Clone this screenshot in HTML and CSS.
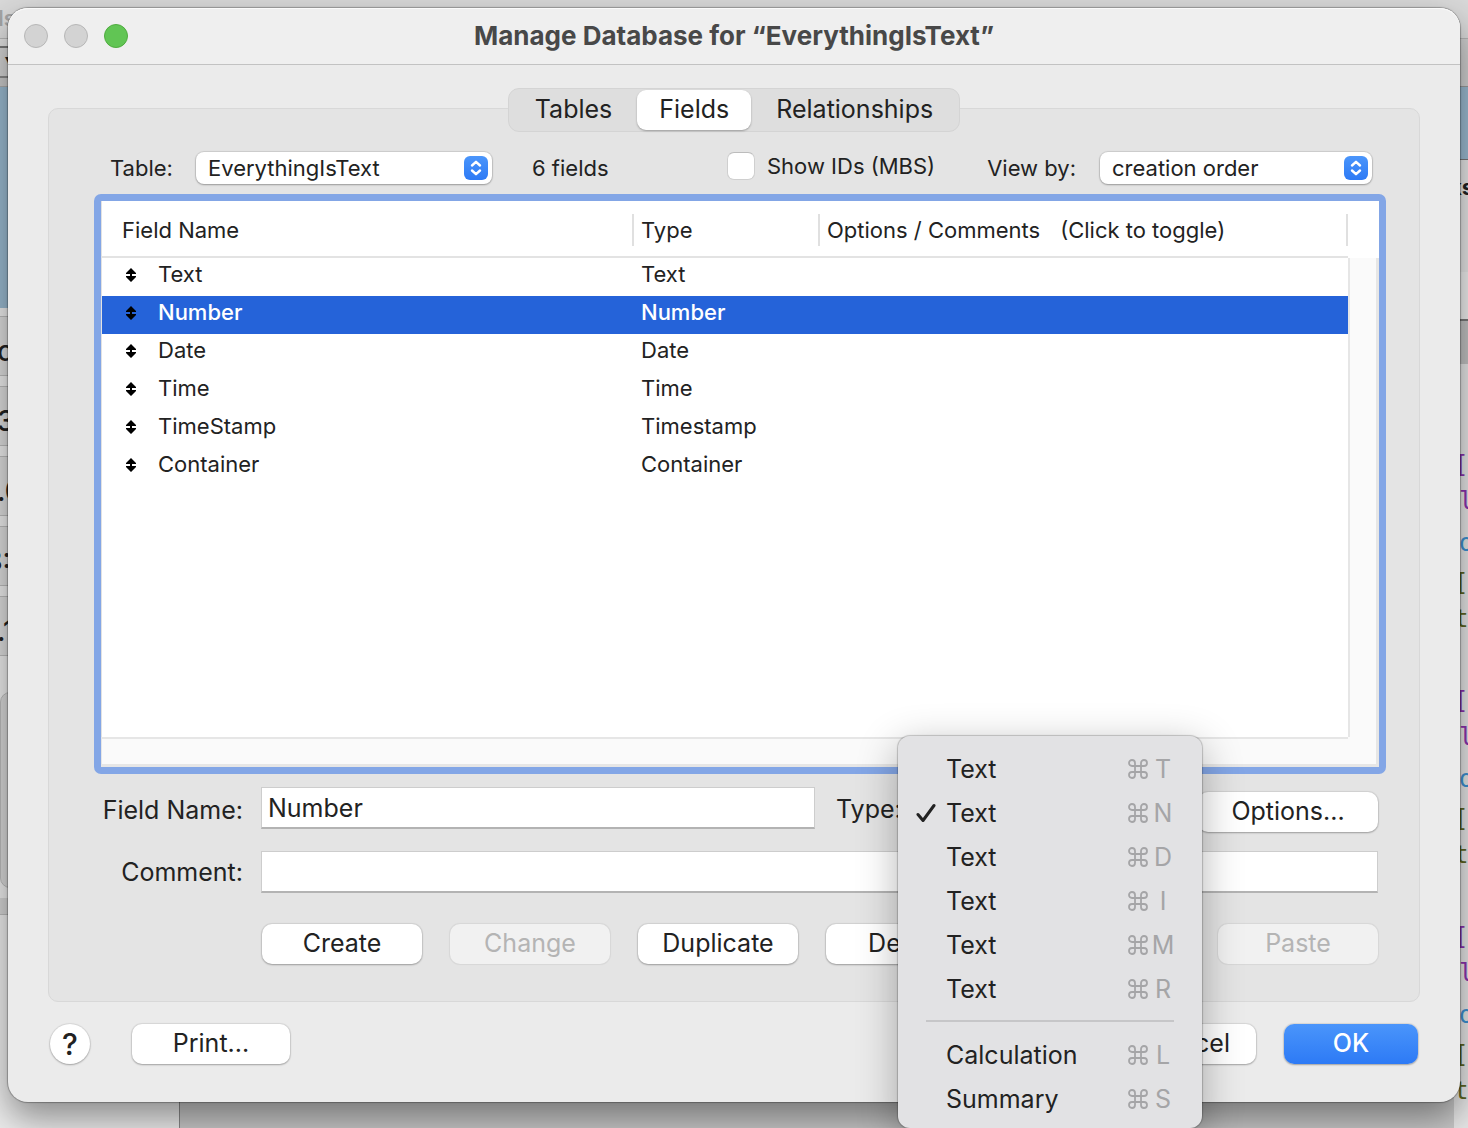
FILE: index.html
```html
<!DOCTYPE html>
<html lang="en">
<head>
<meta charset="utf-8">
<title>Manage Database for “EverythingIsText”</title>
<link rel="stylesheet" href="styles.css">
</head>
<body>
<svg class="sprite" aria-hidden="true">
  <symbol id="chevrons" viewBox="0 0 24 24"><path d="M8 9.500 12 5.800l4 3.700M8 14.500l4 3.700 4-3.700" fill="none" stroke="#fff" stroke-width="2.400" stroke-linecap="round" stroke-linejoin="round"/></symbol>
  <symbol id="handle" viewBox="0 0 10 14"><path d="M5 0 10 5V6H6v2h4v1L5 14 0 9V8h4V6H0V5z" fill="#000"/></symbol>
  <symbol id="command" viewBox="0 0 20 20"><path d="M7 7h6v6H7zM7 7H4a3 3 0 1 1 3-3zM13 7V4a3 3 0 1 1 3 3zM13 13h3a3 3 0 1 1-3 3zM7 13v3a3 3 0 1 1-3-3z" fill="none" stroke="currentColor" stroke-width="1.800"/></symbol>
  <symbol id="check" viewBox="0 0 20 20"><path d="M2 11.500 7 17.500 18 2.500" fill="none" stroke="#222" stroke-width="3" stroke-linecap="round" stroke-linejoin="round"/></symbol>
</svg>

<div class="desktop" aria-hidden="true">
  <div class="strip strip-left">
    <div class="doc-title">ls</div>
    <div class="doc-toolbar"><span>▾</span></div>
    <div class="doc-header"></div>
    <div class="doc-rows">
      <div class="doc-row">c</div>
      <div class="doc-row">3</div>
      <div class="doc-row">.0</div>
      <div class="doc-row doc-row-end">8:</div>
      <div class="doc-row">.1</div>
    </div>
    <div class="doc-box"></div>
    <div class="doc-band"></div>
  </div>
  <div class="strip-middle"></div>
  <div class="strip strip-right">
    <div class="doc-title"></div>
    <div class="side-toolbar"></div>
    <div class="side-header"></div>
    <div class="side-label">ks</div>
    <div class="side-space"></div>
    <div class="side-bar"></div>
    <div class="code">
      <div class="code-block"><span class="purple">[</span><span class="purple inner">l</span><span class="blue inner">o</span><span class="olive">[</span><span class="olive">t</span></div>
      <div class="code-block"><span class="purple">[</span><span class="purple inner">l</span><span class="blue inner">o</span><span class="olive">[</span><span class="olive">t</span></div>
      <div class="code-block"><span class="purple">[</span><span class="purple inner">l</span><span class="blue inner">o</span><span class="olive">[</span><span class="olive">t</span></div>
    </div>
  </div>
</div>

<main class="dialog">
  <header class="titlebar">
    <div class="lights"><span class="light"></span><span class="light"></span><span class="light light-green"></span></div>
    <h1>Manage Database for “EverythingIsText”</h1>
  </header>

  <div class="content">
    <nav class="tabs">
      <button type="button">Tables</button>
      <button type="button" class="active">Fields</button>
      <button type="button">Relationships</button>
    </nav>

    <section class="panel">
      <div class="filters">
        <label class="table-label" for="table">Table:</label>
        <span class="select select-table">
          <select id="table"><option>EverythingIsText</option></select>
          <svg class="badge"><use href="#chevrons"/></svg>
        </span>
        <span class="count">6 fields</span>
        <label class="show-ids"><input type="checkbox">Show IDs (MBS)</label>
        <label for="view">View by:</label>
        <span class="select select-view">
          <select id="view"><option>creation order</option></select>
          <svg class="badge"><use href="#chevrons"/></svg>
        </span>
      </div>

      <div class="list">
        <div class="list-body">
          <table>
            <thead>
              <tr><th class="col-name">Field Name</th><th class="col-type">Type</th><th>Options / Comments<span class="hint">(Click to toggle)</span></th></tr>
            </thead>
            <tbody>
              <tr><td><svg class="handle"><use href="#handle"/></svg>Text</td><td>Text</td><td></td></tr>
              <tr class="selected"><td><svg class="handle"><use href="#handle"/></svg>Number</td><td>Number</td><td></td></tr>
              <tr><td><svg class="handle"><use href="#handle"/></svg>Date</td><td>Date</td><td></td></tr>
              <tr><td><svg class="handle"><use href="#handle"/></svg>Time</td><td>Time</td><td></td></tr>
              <tr><td><svg class="handle"><use href="#handle"/></svg>TimeStamp</td><td>Timestamp</td><td></td></tr>
              <tr><td><svg class="handle"><use href="#handle"/></svg>Container</td><td>Container</td><td></td></tr>
            </tbody>
          </table>
        </div>
        <div class="scroll-y"></div>
        <div class="scroll-x"></div>
        <div class="scroll-corner"></div>
      </div>

      <form class="editor">
        <label for="name">Field Name:</label>
        <div class="name-row">
          <input id="name" class="name-input" type="text" value="Number">
          <label for="type">Type:</label>
          <div class="type-field">
            <select id="type"><option>Number</option></select>
            <div class="menu" role="menu">
              <button type="button" role="menuitem"><span class="tick"></span><span class="item">Text</span><svg class="cmd"><use href="#command"/></svg><kbd>T</kbd></button>
              <button type="button" role="menuitem"><span class="tick"><svg><use href="#check"/></svg></span><span class="item">Text</span><svg class="cmd"><use href="#command"/></svg><kbd>N</kbd></button>
              <button type="button" role="menuitem"><span class="tick"></span><span class="item">Text</span><svg class="cmd"><use href="#command"/></svg><kbd>D</kbd></button>
              <button type="button" role="menuitem"><span class="tick"></span><span class="item">Text</span><svg class="cmd"><use href="#command"/></svg><kbd>I</kbd></button>
              <button type="button" role="menuitem"><span class="tick"></span><span class="item">Text</span><svg class="cmd"><use href="#command"/></svg><kbd>M</kbd></button>
              <button type="button" role="menuitem"><span class="tick"></span><span class="item">Text</span><svg class="cmd"><use href="#command"/></svg><kbd>R</kbd></button>
              <hr>
              <button type="button" role="menuitem"><span class="tick"></span><span class="item">Calculation</span><svg class="cmd"><use href="#command"/></svg><kbd>L</kbd></button>
              <button type="button" role="menuitem"><span class="tick"></span><span class="item">Summary</span><svg class="cmd"><use href="#command"/></svg><kbd>S</kbd></button>
            </div>
          </div>
          <button type="button" class="btn btn-options">Options...</button>
        </div>
        <label for="comment">Comment:</label>
        <input id="comment" type="text">
        <div class="actions">
          <button type="button" class="btn">Create</button>
          <button type="button" class="btn" disabled>Change</button>
          <button type="button" class="btn">Duplicate</button>
          <button type="button" class="btn">Delete</button>
          <button type="button" class="btn push">Copy</button>
          <button type="button" class="btn" disabled>Paste</button>
        </div>
      </form>
    </section>

    <footer class="footer">
      <button type="button" class="help" aria-label="Help">?</button>
      <button type="button" class="btn btn-print">Print...</button>
      <button type="button" class="btn btn-small push">Cancel</button>
      <button type="button" class="btn btn-small btn-primary">OK</button>
    </footer>
  </div>
</main>
</body>
</html>
```
FILE: styles.css
```css
* { box-sizing: border-box; }

body {
  margin: 0;
  padding: 8px 8px 26px;
  position: relative;
  overflow: hidden;
  font-family: Inter, "Liberation Sans", sans-serif;
  font-size: 25px;
  line-height: 32px;
  color: #222;
  background: #c4c4c4;
}

button, input, select { font: inherit; color: inherit; margin: 0; }

.sprite { position: absolute; width: 0; height: 0; }

/* Windows lying behind the dialog */
.desktop {
  position: absolute;
  inset: 0;
  display: flex;
  overflow: hidden;
}
.strip { display: flex; flex-direction: column; flex: none; }
.strip-left { width: 180px; background: #ececec; border-right: 1px solid #888; }
.strip-middle { flex: 1; background: linear-gradient(#d9d9d9 0 38px, #c8c8c8 38px); }
.strip-right { width: 14px; background: #e6e6e6; }
.doc-title {
  height: 39px;
  flex: none;
  margin-right: -1px;
  border-bottom: 1px solid #b4b4b4;
  background: #d9d9d9;
  color: #a5a5a5;
  font-size: 22px;
  font-weight: 600;
  line-height: 36px;
  text-indent: -2px;
}
.doc-toolbar {
  height: 48px;
  flex: none;
  border-bottom: 1px solid #aaa;
  background: linear-gradient(#dedede 0 7px, #777 7px 9px, #d2d2d2 9px 37px, #888 37px 39px, #c9c9c9 39px);
}
.doc-toolbar span { display: block; padding-left: 5px; font-size: 14px; line-height: 40px; }
.doc-header { height: 221px; flex: none; background: #99b9cf; }
.doc-rows { display: flex; flex-direction: column; gap: 10px; padding-top: 8px; }
.doc-row {
  width: 24px;
  height: 60px;
  border: solid #bbb;
  border-width: 1px 0;
  background: #dcdcdc;
  font-size: 28px;
  font-weight: 500;
  line-height: 68px;
  text-indent: -3px;
}
.doc-row-end { text-indent: -15px; }
.doc-box {
  height: 196px;
  flex: none;
  margin-top: 36px;
  border: 1px solid #bbb;
  border-radius: 10px;
  background: #d8d8d8;
}
.doc-band { height: 17px; flex: none; margin-top: 10px; background: #d4d4d4; border-bottom: 1px solid #bbb; }
.side-toolbar { height: 48px; background: #cfcfcf; border-bottom: 1px solid #999; }
.side-header { height: 73px; background: #99b9cf; border-bottom: 1px solid #777; }
.side-label {
  height: 112px;
  background: #e6e6e6;
  font-size: 22px;
  font-weight: 700;
  line-height: 54px;
  text-indent: -5px;
}
.side-space { height: 49px; background: #eee; border-bottom: 2px solid #777; }
.side-bar { height: 43px; background: #c0c0c0; }
.code {
  display: flex;
  flex-direction: column;
  gap: 46px;
  padding-top: 83px;
  font-family: "DejaVu Sans Mono", monospace;
  font-size: 24px;
  line-height: 36px;
}
.code-block { display: flex; flex-direction: column; }
.code-block .inner { text-indent: 5px; }
.purple { color: #8a32ad; }
.code-block .blue { color: #3d91d2; margin: 6px 0 4px; }
.olive { color: #5c6420; }

/* Dialog window */
.dialog {
  position: relative;
  border-radius: 20px;
  background: #ebebeb;
  box-shadow: 0 0 1px 1px rgba(0, 0, 0, .28), 0 16px 36px rgba(0, 0, 0, .42);
}
.titlebar {
  display: grid;
  grid-template-columns: 120px 1fr 120px;
  align-items: center;
  height: 57px;
  padding: 0 16px;
  border-bottom: 1px solid #c2c2c2;
  border-radius: 20px 20px 0 0;
  background: #efefef;
  box-shadow: inset 0 1px 0 #fafafa;
}
.lights { display: flex; gap: 16px; }
.light { width: 24px; height: 24px; border: 1px solid #b7b7b7; border-radius: 50%; background: #d3d3d3; }
.light-green { border-color: #4fac3f; background: #61c554; }
h1 { margin: 0; color: #484848; font-size: 26px; font-weight: 700; line-height: 32px; text-align: center; }

.content { padding: 23px 40px 38px; }

.tabs {
  position: relative;
  display: flex;
  width: fit-content;
  margin: 0 auto;
  padding: 1px;
  border: 1px solid #d4d4d4;
  border-radius: 11px;
  background: #dedede;
}
.tabs button {
  height: 40px;
  padding: 0 25px 2px;
  border: 0;
  border-radius: 9px;
  background: none;
}
.tabs .active { padding: 0 22px 2px; background: #fff; box-shadow: 0 1px 2px rgba(0, 0, 0, .3); }

.panel {
  margin-top: -24px;
  padding: 43px 33px 37px 45px;
  border: 1px solid #d8d8d8;
  border-radius: 10px;
  background: #e4e4e4;
}

.filters {
  display: flex;
  align-items: center;
  margin-bottom: 10px;
  padding: 0 14px 0 16px;
  font-size: 22px;
}
.table-label { width: 86px; }
.select { position: relative; display: block; height: 32px; }
.select-table { width: 296px; }
.select-view { width: 272px; margin-left: 24px; }
.select select {
  appearance: none;
  display: block;
  width: 100%;
  height: 32px;
  padding: 0 32px 0 12px;
  border: 0;
  border-radius: 8px;
  background: #fff;
  box-shadow: 0 0 1px 1px rgba(0, 0, 0, .1), 0 1px 2px rgba(0, 0, 0, .25);
}
.badge {
  position: absolute;
  top: 4px;
  right: 4px;
  width: 24px;
  height: 24px;
  border-radius: 6px;
  background: linear-gradient(#4a95fb, #2d7af5);
  pointer-events: none;
}
.count { margin-left: 40px; }
.show-ids { display: flex; align-items: center; gap: 12px; margin: 0 52px 4px auto; line-height: 28px; }
.show-ids input {
  appearance: none;
  width: 28px;
  height: 28px;
  border: 1px solid #cfcfcf;
  border-top-color: #bcbcbc;
  border-radius: 7px;
  background: #fff;
}

/* Field list with its focus ring */
.list {
  display: grid;
  grid-template: 1fr 30px / 1fr 31px;
  border: 7px solid #83a6e6;
  border-radius: 7px;
  background: #fff;
  font-size: 22px;
}
.list-body { min-height: 536px; border-left: 1px solid #e2e2e2; }
table { width: 100%; border-collapse: separate; border-spacing: 0; table-layout: fixed; }
th {
  position: relative;
  height: 57px;
  padding: 2px 0 0 7px;
  border-bottom: 2px solid #e3e3e3;
  font-weight: 400;
  text-align: left;
}
th::after {
  content: "";
  position: absolute;
  top: 13px;
  bottom: 10px;
  right: 0;
  width: 2px;
  background: #e0e0e0;
}
.col-name { width: 532px; padding-left: 20px; }
.col-type { width: 186px; }
.hint { margin-left: 20px; }
td { height: 38px; padding: 0 0 6px 7px; }
td:first-child { padding-left: 24px; }
.handle { width: 10px; height: 14px; margin-right: 22px; vertical-align: 0; }
.selected { color: #fff; font-weight: 500; }
.selected td { background: #2563d9; }
.scroll-y {
  margin-top: 57px;
  border: solid #e6e6e6;
  border-width: 0 3px 0 2px;
  background: #fafafa;
}
.scroll-x {
  border: solid #e6e6e6;
  border-width: 2px 0 3px 1px;
  background: #fafafa;
}
.scroll-corner {
  border: solid #e6e6e6;
  border-width: 0 3px 3px 0;
  background: #fafafa;
}

/* Field editor */
.editor {
  display: grid;
  grid-template-columns: 149px 1fr;
  gap: 19px 18px;
  align-items: center;
  padding: 13px 8px 0 0;
}
.editor > label { text-align: right; }
.editor input {
  width: 100%;
  height: 42px;
  padding: 0 6px;
  border: 1px solid #cdcdcd;
  border-bottom: 2px solid #b3b3b3;
  background: #fff;
}
.name-row { display: flex; align-items: flex-start; }
.name-row label { padding-top: 6px; }
.editor .name-input { width: 554px; margin-right: 21px; }
.type-field { position: relative; flex: 1; margin: 0 16px 0 10px; }
.type-field select { width: 100%; height: 40px; border: 0; border-radius: 10px; background: #fff; }
.actions {
  grid-column: 2;
  display: flex;
  gap: 28px;
  padding: 12px 0 0 1px;
}

.btn {
  width: 160px;
  height: 40px;
  padding: 0 0 2px;
  border: 0;
  border-radius: 10px;
  background: #fff;
  box-shadow: 0 0 1px 1px rgba(0, 0, 0, .08), 0 1px 2px rgba(0, 0, 0, .25);
}
.btn:disabled { background: #f1f1f1; color: #b4b4b4; box-shadow: 0 0 1px 1px rgba(0, 0, 0, .06); }
.btn-options { width: 180px; margin-top: 5px; }
.btn-small { width: 134px; }
.btn-primary { color: #fff; font-weight: 500; background: linear-gradient(#4a95fb, #2d7af5); }
.push { margin-left: auto; }

.footer { display: flex; align-items: center; gap: 28px; padding: 22px 2px 0; }
.help {
  width: 40px;
  height: 40px;
  padding: 0;
  border: 0;
  border-radius: 50%;
  background: #fff;
  font-size: 30px;
  font-weight: 500;
  box-shadow: 0 0 1px 1px rgba(0, 0, 0, .08), 0 1px 2px rgba(0, 0, 0, .25);
}
.btn-print { width: 158px; margin-left: 14px; }

/* Open field-type menu */
.menu {
  position: absolute;
  z-index: 1;
  top: -51px;
  right: -20px;
  width: 304px;
  padding: 11px 26px 7px 18px;
  border-radius: 12px;
  background: #e2e2e4;
  box-shadow: 0 0 1px 1px rgba(0, 0, 0, .2), 0 10px 40px rgba(0, 0, 0, .3);
}
.menu button {
  display: grid;
  grid-template-columns: 20px 1fr 22px 26px;
  align-items: center;
  width: 100%;
  height: 44px;
  padding: 0;
  border: 0;
  background: none;
  text-align: left;
}
.tick svg { display: block; width: 20px; height: 20px; }
.item { padding-left: 10px; }
.cmd { width: 20px; height: 20px; color: #a5a5a7; }
kbd { font: inherit; color: #a5a5a7; text-align: center; }
.menu hr { margin: 9px 2px 11px 10px; border: 0; border-top: 2px solid #c6c6c8; }
```
